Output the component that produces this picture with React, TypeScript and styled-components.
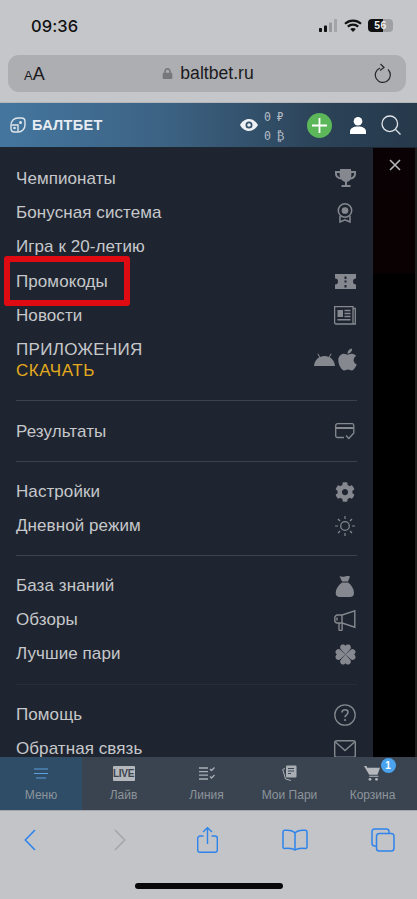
import React from "react";
import styled, { createGlobalStyle } from "styled-components";
import { FaApple, FaCog, FaLock } from "react-icons/fa";

const Global = createGlobalStyle`
  html, body { margin: 0; padding: 0; background: #c4c5c8; }
  * { box-sizing: border-box; }
`;
const Page = styled.div`
  width: 417px; height: 899px; overflow: hidden; display: flex; flex-direction: column;
  font-family: "Liberation Sans", Arial, sans-serif; position: relative; background: #c4c5c8;
`;
const Browser = styled.div`
  height: 103px; flex: none; background: #c5c6c9; display: flex; flex-direction: column;
  border-bottom: 1px solid #b4b6b9;
`;
const Status = styled.div`
  height: 55px; flex: none; display: flex; align-items: center; justify-content: space-between;
  padding: 0 24px 4px 31px; position: relative;
`;
const Time = styled.span`
  font: 500 16.5px Inter, sans-serif; color: #111; letter-spacing: .1px;
`;
const StatusIcons = styled.div`
  display: flex; align-items: center; gap: 6px;
`;
const Battery = styled.div`
  width: 25px; height: 13px; border-radius: 4px; display: flex; overflow: hidden;
  font: 700 10.5px/13px "Liberation Sans", sans-serif; text-align: center;
  background: linear-gradient(90deg, #111 0 60%, #9fa0a3 60% 100%); color: #eee; justify-content: center;
  letter-spacing: .5px;
`;
const UrlBar = styled.div`
  margin: 0 11px 0 8px; height: 37px; flex: none; border-radius: 11px; background: #adaeb2;
  display: flex; align-items: center; justify-content: space-between; padding: 0 15px 0 16px;
  color: #1a1a1c;
`;
const Aa = styled.span`
  font-size: 18px; width: 30px; line-height: 1;
  small { font-size: 13px; }
`;
const Url = styled.div`
  display: flex; align-items: center; gap: 7px; font-size: 17.6px; margin-left: -12px;
  svg { color: #77787c; }
`;
const Header = styled.header`
  height: 45px; flex: none; display: flex; align-items: center; padding: 0 16px 0 10px;
  background: linear-gradient(90deg, #44769f 0%, #3c6283 40%, #2b4257 78%, #26394b 100%);
  color: #fff; border-bottom: 1px solid #1d2833;
`;
const Logo = styled.div`
  display: flex; align-items: center; gap: 6px; font-weight: 700; font-size: 14.5px; color: #e6ecf1;
  flex: 1; letter-spacing: .3px;
`;
const Balance = styled.div`
  display: flex; flex-direction: column; gap: 7px; width: 34px; margin: 3px 9px 0 6px;
  font: 400 11.5px/12px "DejaVu Sans Mono", monospace; color: #b4bdc6; white-space: pre; letter-spacing: -.7px;
`;
const Plus = styled.div`
  width: 25px; height: 25px; border-radius: 50%; background: #5bb75a; display: flex;
  align-items: center; justify-content: center; margin-right: 18px;
`;
const HeaderIcon = styled.div`
  display: flex; margin-right: ${(p: { $mr?: number }) => p.$mr ?? 0}px;
`;
const Body = styled.div`
  height: 609px; flex: none; display: flex; position: relative; overflow: hidden;
`;
const Panel = styled.nav`
  width: 373px; flex: none; background: #1f2530; overflow: hidden; padding: 1px 16px 0 16px;
`;
const Backdrop = styled.div`
  flex: 1; background: linear-gradient(180deg, #090103 0, #0a0103 124px, #000 127px, #000 100%);
  border-right: 2px solid #1e1e1e; position: relative;
`;
const Close = styled.div`
  position: absolute; left: 16px; top: 11px; display: flex;
`;
const Section = styled.div<{ $last?: boolean; $first?: boolean; $faint?: boolean }>`
  padding: 13px 0 ${(p) => (p.$first ? 12.5 : 12)}px;
  border-bottom: 1px solid ${(p) => (p.$faint ? "#272e38" : p.$last ? "transparent" : "#3a424c")};
`;
const Row = styled.div`
  height: 34.2px; flex: none; display: flex; align-items: center; justify-content: space-between;
  font-size: 17px; color: #c6c8cb; position: relative; letter-spacing: .08px; white-space: nowrap;
`;
const AppRow = styled(Row)`
  height: 55px; line-height: 21px; letter-spacing: .3px;
`;
const Download = styled.div`
  color: #e3aa1d; letter-spacing: .55px;
`;
const IconSlot = styled.span`
  display: flex; justify-content: center; width: 24px; color: #85888e;
`;
const AppIcons = styled.span`
  display: flex; align-items: center; gap: 0; color: #85888e; margin-right: -3px; margin-top: -1px;
`;
const Highlight = styled.div`
  position: absolute; left: -12px; top: -9px; width: 126px; height: 50px;
  border: 6px solid #e00a12; border-radius: 3px;
`;
const Tabs = styled.div`
  height: 54px; flex: none; display: grid; grid-template-columns: 82px repeat(4, 83px);
  background: #3a4450; border-bottom: 1px solid #a5a7aa;
`;
const Tab = styled.div<{ $active?: boolean }>`
  display: flex; flex-direction: column; align-items: center; padding-top: 6px; position: relative;
  font-size: 12px; color: #8d949b; white-space: nowrap;
  background: ${(p) => (p.$active ? "#2f4d66" : "transparent")};
`;
const TabIcon = styled.div`
  height: 20px; margin-bottom: 5px; display: flex; align-items: center; justify-content: center; position: relative;
  color: #a9aeb4;
`;
const LiveBadge = styled.div`
  width: 22px; height: 15px; background: #b4b7bb; color: #3a4450; border-radius: 1px;
  font: 700 10px/15px "Liberation Sans Narrow", "Liberation Sans", sans-serif; text-align: center; letter-spacing: -.3px;
`;
const CartBadge = styled.div`
  position: absolute; right: -14px; top: -5px; width: 15px; height: 15px; border-radius: 50%;
  background: #4aa3ee; color: #fff; font: 700 10px/15px "Liberation Sans", sans-serif; text-align: center;
`;
const Toolbar = styled.div`
  flex: 1; background: #c3c4c7; display: flex; flex-direction: column; align-items: center;
`;
const ToolRow = styled.div`
  width: 100%; height: 58px; display: grid; grid-template-columns: 60px 120px 54px 122px 54px;
  align-items: center; justify-items: center;
`;
const Home = styled.div`
  width: 148px; height: 6px; border-radius: 3px; background: #08080a; margin-top: 14px;
`;

const Trophy = () => (
  <svg width="21" height="20" viewBox="0 0 21 20" fill="currentColor">
    <path d="M5 0h11v2h5v3c0 3-2 5-5.400 5.600-.8 1.200-2 2-3.600 2.400v3h3.500v2h-9v-2H10v-3c-1.600-.4-2.800-1.200-3.600-2.400C3 10 0 8 0 5V2h5zM2 4v1c0 1.600 1 2.800 3 3.400-.3-1.300-.4-2.800-.4-4.400zm14.400 0c0 1.600-.1 3.100-.4 4.400 2-.6 3-1.800 3-3.400V4z" />
  </svg>
);
const Medal = () => (
  <svg width="16" height="20" viewBox="0 0 16 20" fill="none" stroke="currentColor" strokeWidth="1.500">
    <circle cx="8" cy="7.500" r="6.700" />
    <circle cx="8" cy="7.500" r="2.600" fill="currentColor" />
    <path d="M3 13v6l5-2.200 5 2.200v-6" />
  </svg>
);
const Ticket = () => (
  <svg width="21" height="15" viewBox="0 0 21 15" fill="currentColor">
    <path d="M0 0h21v4.500a3 3 0 0 0 0 6V15H0v-4.500a3 3 0 0 0 0-6zM9.500 2.500v2.500h2V2.500zm0 5v-1h2v2h-2zm0 3.500v2.500h2V11z" fillRule="evenodd" />
  </svg>
);
const News = () => (
  <svg width="22" height="19" viewBox="0 0 22 19" fill="none" stroke="currentColor" strokeWidth="1.300">
    <path d="M19 2.500h2.300V18H2a1.400 1.400 0 0 1-1.400-1.400V.7H19V18" />
    <rect x="3.500" y="4" width="5.500" height="7" fill="currentColor" stroke="none" />
    <path d="M10.500 4.600h6M10.500 7.500h6M10.500 10.500h6M3.500 13.800h13" strokeWidth="1.500" />
  </svg>
);
const Android = () => (
  <svg width="21" height="13" viewBox="0 0 21 13" fill="currentColor">
    <path d="M0 13C.4 8.900 2.300 5.900 5.300 4.300L3.400 1l.8-.5 2 3.400a10.700 10.700 0 0 1 8.600 0l2-3.400.8.500-1.900 3.300c3 1.600 4.900 4.600 5.300 8.700z" />
  </svg>
);
const Card = () => (
  <svg width="20" height="17" viewBox="0 0 20 17" fill="none" stroke="currentColor" strokeWidth="1.300">
    <path d="M9 14.500H2.500A1.800 1.800 0 0 1 .7 12.700V2.500A1.800 1.800 0 0 1 2.500.7h14.500a1.800 1.800 0 0 1 1.800 1.800v7" />
    <path d="M.7 5h18" strokeWidth="2" />
    <path d="M11 12.500l2.800 3 5.500-6" />
  </svg>
);
const Sun = () => (
  <svg width="20" height="20" viewBox="0 0 20 20" fill="none" stroke="currentColor" strokeWidth="1.200">
    <circle cx="10" cy="10" r="4.300" />
    <path d="M10 0v3M10 17v3M0 10h3M17 10h3M3 3l2 2M15 15l2 2M3 17l2-2M15 5l2-2" />
  </svg>
);
const Bag = () => (
  <svg width="20" height="21" viewBox="0 0 20 21" fill="currentColor">
    <path d="M4.500 0c1.500.8 3.500 1 5.500.4 2-.6 3.500-.6 5 0L13 5.500H7zM7 6.500h6.200C16.800 9.500 19 13 19 17c0 2.500-1.500 4-4 4H5c-2.700 0-4.300-1.500-4.300-4C.7 13 3.200 9.500 7 6.500z" />
  </svg>
);
const Megaphone = () => (
  <svg width="22" height="21" viewBox="0 0 22 21" fill="none" stroke="currentColor" strokeWidth="1.400">
    <path d="M20.800.8v16.400L8 13V5zM8 5H3.500A2.800 2.800 0 0 0 .8 8v2a2.900 2.900 0 0 0 2.700 3H8z" />
    <path d="M5 13v6.500a.9.900 0 0 0 .9.900h1.300a.9.900 0 0 0 .9-.9V13M3 7.500v3" />
  </svg>
);
const cloverLobe = "M10.500 10.500 5.800 5.300A3 3 0 0 1 7 .6c1.500-.4 2.800.2 3.500 1.200C11.200.8 12.500.2 14 .6a3 3 0 0 1 1.200 4.700z";
const Clover = () => (
  <svg width="21" height="21" viewBox="0 0 21 21" fill="currentColor">
    <path d={cloverLobe} />
    <path d={cloverLobe} transform="rotate(90 10.500 10.500)" />
    <path d={cloverLobe} transform="rotate(180 10.500 10.500)" />
    <path d={cloverLobe} transform="rotate(270 10.500 10.500)" />
  </svg>
);
const Help = () => (
  <svg width="22" height="22" viewBox="0 0 22 22" fill="none" stroke="currentColor" strokeWidth="1.300">
    <circle cx="11" cy="11" r="10.200" />
    <path d="M8 8.500C8 6.800 9.300 5.800 11 5.800c1.800 0 3 1 3 2.500 0 2.500-3 2.500-3 5" strokeWidth="1.600" />
    <circle cx="11" cy="16" r="1.100" fill="currentColor" stroke="none" />
  </svg>
);
const Mail = () => (
  <svg width="22" height="18" viewBox="0 0 22 18" fill="none" stroke="currentColor" strokeWidth="1.400">
    <rect x=".7" y=".7" width="20.600" height="16.600" rx="2" />
    <path d="M1.200 1.800 11 10.500l9.800-8.700" />
  </svg>
);

export default function App() {
  return (
    <Page>
      <Global />
      <Browser>
        <Status>
          <Time>09:36</Time>
          <StatusIcons>
            <svg width="19" height="13" viewBox="0 0 19 13" fill="#111">
              <rect x="0" y="9" width="3" height="4" rx=".7" /><rect x="5" y="6.500" width="3" height="6.500" rx=".7" />
              <rect x="10" y="3.500" width="3" height="9.500" rx=".7" fill="#98999c" /><rect x="15" y="0" width="3" height="13" rx=".7" fill="#a4a5a8" />
            </svg>
            <svg width="18" height="13" viewBox="0 0 18 13" fill="none" stroke="#111" strokeWidth="2.200">
              <path d="M1 4.800C5.700.6 12.300.6 17 4.800M3.800 7.600c3-2.600 7.400-2.600 10.400 0" />
              <path d="M9 13 6.200 10c1.700-1.200 3.900-1.200 5.600 0z" fill="#111" stroke="none" />
            </svg>
            <Battery>56</Battery>
          </StatusIcons>
        </Status>
        <UrlBar>
          <Aa><small>A</small>A</Aa>
          <Url><FaLock size={11} /><span>baltbet.ru</span></Url>
          <svg width="17" height="21" viewBox="0 0 17 21" fill="none" stroke="#26272a" strokeWidth="1.200">
            <path d="M6 5A7.500 7.500 0 1 0 14 6.500" />
            <path d="M6.500 1 10 4.500 6 7.500" />
          </svg>
        </UrlBar>
      </Browser>
      <Header>
        <Logo>
          <svg width="16" height="16" viewBox="0 0 16 16" fill="none" stroke="#dfe6ec" strokeWidth="1.400">
            <path d="M1 8c0-4 3-7 7-7h3.500C13.500 1 15 2.500 15 4.500V8c0 4-3 7-7 7H4.500C2.500 15 1 13.500 1 11.500z" />
            <path d="M1.500 8h6.500v6.500" />
            <circle cx="10.500" cy="5.500" r="1.500" fill="#dfe6ec" stroke="none" />
            <circle cx="4.500" cy="11" r="1.300" fill="#dfe6ec" stroke="none" />
          </svg>
          <span>БАЛТБЕТ</span>
        </Logo>
        <svg width="18" height="12" viewBox="0 0 18 12" fill="#eef1f4">
          <path fillRule="evenodd" d="M9 0c3.800 0 7 2.400 9 6-2 3.600-5.200 6-9 6s-7-2.400-9-6c2-3.600 5.200-6 9-6zm0 2.500a3.500 3.500 0 1 0 0 7 3.500 3.500 0 0 0 0-7zm0 1.700a1.800 1.800 0 1 1 0 3.600 1.800 1.800 0 0 1 0-3.600z" />
        </svg>
        <Balance>
          <span>0 ₽</span>
          <span>0 ₿</span>
        </Balance>
        <Plus>
          <svg width="15" height="15" viewBox="0 0 15 15" stroke="#fff" strokeWidth="1.800"><path d="M7.500 0v15M0 7.500h15" /></svg>
        </Plus>
        <HeaderIcon $mr={15}>
          <svg width="16" height="17" viewBox="0 0 16 17" fill="#fff">
            <circle cx="8" cy="4.300" r="4.300" />
            <path d="M0 17v-2.500C0 11.500 3 9.500 8 9.500s8 2 8 5V17z" />
          </svg>
        </HeaderIcon>
        <HeaderIcon>
          <svg width="20" height="20" viewBox="0 0 20 20" fill="none" stroke="#dfe3e7" strokeWidth="1.300">
            <circle cx="8.800" cy="8.800" r="7.800" />
            <path d="m14.500 14.500 5 5" />
          </svg>
        </HeaderIcon>
      </Header>
      <Body>
        <Panel>
          <Section $first>
            <Row>Чемпионаты<IconSlot><Trophy /></IconSlot></Row>
            <Row>Бонусная система<IconSlot><Medal /></IconSlot></Row>
            <Row>Игра к 20-летию</Row>
            <Row>Промокоды<IconSlot><Ticket /></IconSlot><Highlight /></Row>
            <Row>Новости<IconSlot><News /></IconSlot></Row>
            <AppRow>
              <div>ПРИЛОЖЕНИЯ<Download>СКАЧАТЬ</Download></div>
              <AppIcons><Android /><FaApple size={25} /></AppIcons>
            </AppRow>
          </Section>
          <Section>
            <Row>Результаты<IconSlot><Card /></IconSlot></Row>
          </Section>
          <Section>
            <Row>Настройки<IconSlot><FaCog size={20} /></IconSlot></Row>
            <Row>Дневной режим<IconSlot><Sun /></IconSlot></Row>
          </Section>
          <Section $faint>
            <Row>База знаний<IconSlot><Bag /></IconSlot></Row>
            <Row>Обзоры<IconSlot><Megaphone /></IconSlot></Row>
            <Row>Лучшие пари<IconSlot><Clover /></IconSlot></Row>
          </Section>
          <Section $last>
            <Row>Помощь<IconSlot><Help /></IconSlot></Row>
            <Row>Обратная связь<IconSlot><Mail /></IconSlot></Row>
          </Section>
        </Panel>
        <Backdrop>
          <Close>
            <svg width="12" height="12" viewBox="0 0 12 12" stroke="#b4b6b9" strokeWidth="1.600"><path d="m1 1 10 10M11 1 1 11" /></svg>
          </Close>
        </Backdrop>
      </Body>
      <Tabs>
        <Tab $active>
          <TabIcon>
            <svg width="14" height="11" viewBox="0 0 14 11" stroke="#5ca0dc" strokeWidth="1.100"><path d="M0 1h14M0 5.500h14M2 10h10" /></svg>
          </TabIcon>
          Меню
        </Tab>
        <Tab><TabIcon><LiveBadge>LIVE</LiveBadge></TabIcon>Лайв</Tab>
        <Tab>
          <TabIcon>
            <svg width="16" height="13" viewBox="0 0 16 13" fill="none" stroke="#a9aeb4" strokeWidth="1.300">
              <path d="M0 1h9M0 4.600h9M0 8.200h9M0 12h9M11 2l1.500 1.500L15.500.5M11 9.500l1.500 1.500 3-3" />
            </svg>
          </TabIcon>
          Линия
        </Tab>
        <Tab>
          <TabIcon>
            <svg width="15" height="16" viewBox="0 0 15 16" fill="none" stroke="#a9aeb4" strokeWidth="1">
              <path d="M3 3.500.7 4.500 3.500 14l5.500 1.500" />
              <rect x="4" y=".5" width="10.500" height="12" rx="1" fill="#a9aeb4" stroke="none" />
              <path d="M6 3.500h6M6 6h6M6 8.500h3" stroke="#3a4450" />
            </svg>
          </TabIcon>
          Мои Пари
        </Tab>
        <Tab>
          <TabIcon>
            <svg width="18" height="15" viewBox="0 0 18 15" fill="#b4b7bb">
              <path d="M0 0h2.500l.8 1.800H16l-2.500 7H5.200zM5.500 9.800h9v1H5z" />
              <circle cx="6" cy="13.300" r="1.400" /><circle cx="12.500" cy="13.300" r="1.400" />
            </svg>
            <CartBadge>1</CartBadge>
          </TabIcon>
          Корзина
        </Tab>
      </Tabs>
      <Toolbar>
        <ToolRow>
          <svg width="12" height="22" viewBox="0 0 12 22" fill="none" stroke="#2f84ec" strokeWidth="1.600"><path d="M11 1 1.300 11 11 21" /></svg>
          <svg width="12" height="22" viewBox="0 0 12 22" fill="none" stroke="#a5a6aa" strokeWidth="1.600"><path d="m1 1 9.700 10L1 21" /></svg>
          <svg width="21" height="26" viewBox="0 0 21 26" fill="none" stroke="#2f84ec" strokeWidth="1.400">
            <path d="M6.500 9H3a2.300 2.300 0 0 0-2.300 2.300v11.700A2.300 2.300 0 0 0 3 25.300h15a2.300 2.300 0 0 0 2.300-2.300V11.300A2.300 2.300 0 0 0 18 9h-3.500" />
            <path d="M10.500 17V1M6 5l4.500-4.300L15 5" />
          </svg>
          <svg width="26" height="22" viewBox="0 0 26 22" fill="none" stroke="#2f84ec" strokeWidth="1.500">
            <path d="M13 4C11 1.500 7 .8 2.500 1.300 1.500 1.400 1 2 1 3v15c0 1 .7 1.500 1.600 1.400C6.500 19 10.500 19 13 21c2.500-2 6.500-2 10.400-1.600.9.100 1.600-.4 1.600-1.400V3c0-1-.5-1.600-1.500-1.700C19 .8 15 1.500 13 4zM13 4v17" />
          </svg>
          <svg width="24" height="24" viewBox="0 0 24 24" fill="none" stroke="#2f84ec" strokeWidth="1.500">
            <rect x="5.500" y="5.500" width="17.500" height="17.500" rx="2.800" />
            <path d="M5.500 18H3.500A2.700 2.700 0 0 1 1 15.300V3.500A2.700 2.700 0 0 1 3.500 1h11.800A2.700 2.700 0 0 1 18 3.500v2" />
          </svg>
        </ToolRow>
        <Home />
      </Toolbar>
    </Page>
  );
}
